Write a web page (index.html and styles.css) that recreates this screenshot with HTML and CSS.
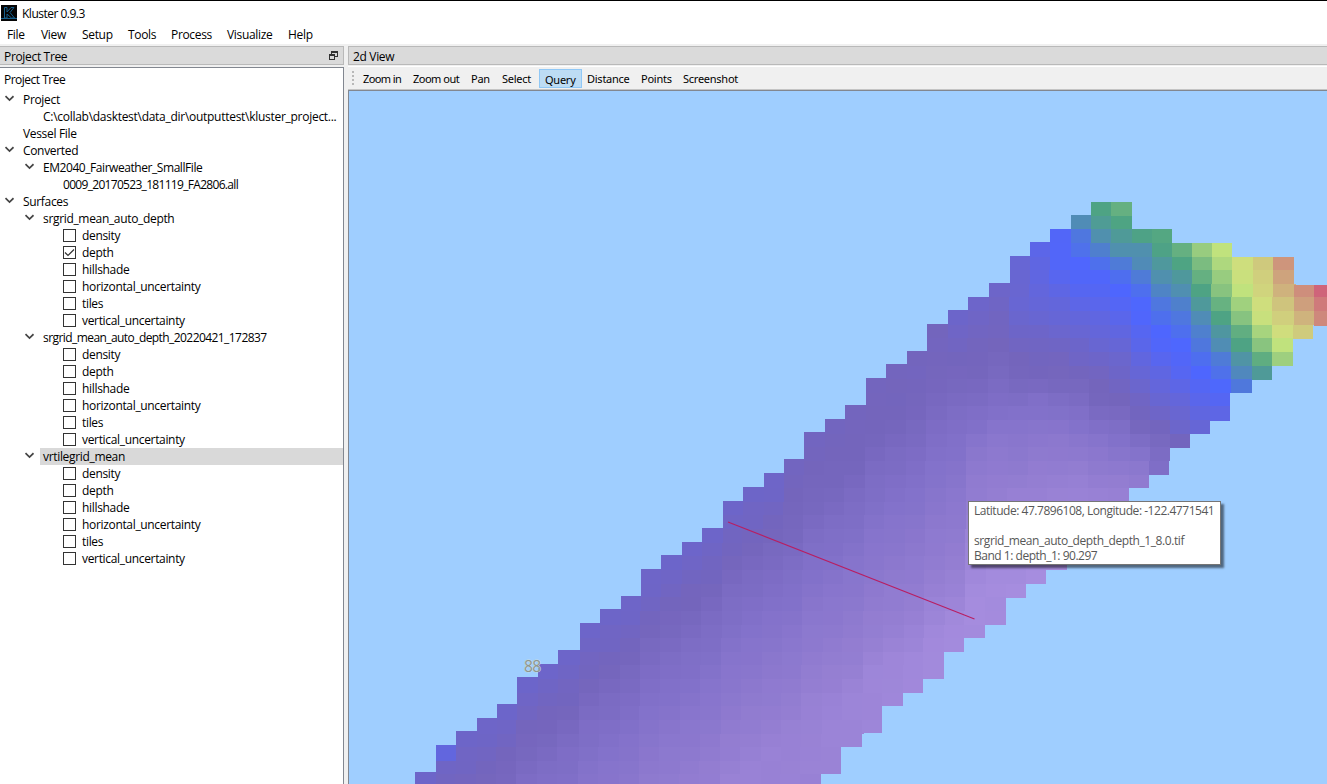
FILE: index.html
```html
<!DOCTYPE html>
<html lang="en">
<head>
<meta charset="utf-8">
<title>Kluster 0.9.3</title>
<link rel="stylesheet" href="styles.css">
</head>
<body>
<header class="titlebar">
  <svg class="logo" width="16" height="16" viewBox="0 0 16 16"><rect width="16" height="16" fill="#050505"/><path d="M3.500 2.500h2.500v4.500l4-4.500h3L9 7.500l4.500 5.500h-3L6 9v4H3.500zM0 13.500h16" fill="none" stroke="#165f8c" stroke-width="1"/></svg>
  <span class="app-name">Kluster 0.9.3</span>
</header>
<nav class="menubar">
  <span class="m-file">File</span><span class="m-view">View</span><span class="m-setup">Setup</span><span class="m-tools">Tools</span><span class="m-process">Process</span><span class="m-visualize">Visualize</span><span class="m-help">Help</span>
</nav>
<main class="workspace">
  <section class="dock">
    <div class="dock-title"><span>Project Tree</span>
      <svg width="9" height="9" viewBox="0 0 9 9" fill="none" stroke="#333" shape-rendering="crispEdges"><path d="M2.500 3V.5h6v5H6M2 1.500h6M.5 3.500h5v5h-5zM1 4.500h4"/></svg>
    </div>
    <div class="tree" id="tree"><div class="tree-head">Project Tree</div></div>
  </section>
  <section class="view">
    <div class="view-title">2d View</div>
    <div class="toolbar"><i class="grip"></i><span class="t-in">Zoom in</span><span class="t-out">Zoom out</span><span class="t-pan">Pan</span><span class="t-select">Select</span><span class="t-query">Query</span><span class="t-distance">Distance</span><span class="t-points">Points</span><span class="t-shot">Screenshot</span></div>
    <div class="map">
      <svg id="chart" width="978" height="693" viewBox="349 91 978 693">
        <g id="cells" shape-rendering="crispEdges"></g>
        <text class="sounding" x="524" y="672">88</text>
        <path d="M728 522L974.500 619" stroke="#b81e62" stroke-width="1.1" fill="none"/>
      </svg>
      <div class="tooltip"><p class="l1">Latitude: 47.7896108, Longitude: -122.4771541</p><p>&nbsp;</p><p class="l3">srgrid_mean_auto_depth_depth_1_8.0.tif</p><p class="l4">Band 1: depth_1: 90.297</p></div>
    </div>
  </section>
</main>
<script src="app.js"></script>
</body>
</html>
```

FILE: styles.css
```css
* { box-sizing: border-box; }
body { margin: 0; width: 1327px; height: 784px; overflow: hidden; background: #f0f0f0; color: #000; font: 12px/17px "Open Sans", "Noto Sans", sans-serif; letter-spacing: -0.33px; display: flex; flex-direction: column; white-space: nowrap; }
.titlebar { height: 25px; flex: none; background: #fff; border-top: 1px solid #000; display: flex; align-items: center; padding-left: 1px; gap: 5px; }
.logo { display: block; margin-top: -1px; }
.app-name { letter-spacing: -0.5px; }
.menubar { height: 19px; flex: none; background: #fff; display: flex; padding-left: 7px; line-height: 20px; }
.m-file { width: 34px; }
.m-view { width: 41px; }
.m-setup { width: 46px; }
.m-tools { width: 43px; }
.m-process { width: 56px; }
.m-visualize { width: 61px; }
.workspace { flex: 1; min-height: 0; display: flex; gap: 4px; padding-top: 2px; }
.dock { width: 344px; display: flex; flex-direction: column; }
.dock-title, .view-title { height: 19px; flex: none; background: #dadada; border: 1px solid #b9b9b9; line-height: 20px; padding-left: 4px; }
.dock-title { border-left: 0; display: flex; justify-content: space-between; padding-right: 5px; }
.dock-title svg { display: block; margin-top: 4px; }
.tree { margin-top: 2px; flex: 1; background: #fff; border-top: 1px solid #828790; border-right: 1px solid #828790; }
.tree-head { height: 23px; padding-left: 4px; line-height: 24px; letter-spacing: -0.5px; }
.row { height: 17px; display: flex; align-items: center; }
.row .arrow { width: 20px; flex: none; display: flex; padding-left: 4px; margin-top: -2px; }
.row .label { flex: 1; padding-left: 3px; }
.row.selected .label { background: #d9d9d9; }
.indent1 { padding-left: 20px; }
.indent2 { padding-left: 40px; }
.indent3 { padding-left: 63px; }
.indent3 .label { padding-left: 6px; }
.indent3 .file { padding-left: 0; }
.row .tight-file { letter-spacing: -0.69px; }
.row .tight-dated { letter-spacing: -0.57px; }
.row .tight-name { letter-spacing: -0.44px; }
.row .path { letter-spacing: -0.28px; }
.box { width: 13px; height: 13px; border: 1px solid #333; background: #fff; flex: none; }
.box svg { display: block; }
.view { flex: 1; min-width: 0; display: flex; flex-direction: column; }
.view-title { border-right: 0; }
.toolbar { height: 24px; flex: none; display: flex; margin-top: 1px; padding: 2px 0 0 4px; border-top: 1px solid #fff; font: 11px/20px "Noto Sans", sans-serif; letter-spacing: -0.25px; border-bottom: 1px solid #c4c4c4; }
.grip { width: 2px; height: 15px; margin: 2px 9px 0 0; background: repeating-linear-gradient(#b8b8b8 0 2px, transparent 2px 4px); }
.toolbar span { height: 19px; }
.toolbar .t-in { width: 50px; letter-spacing: -0.6px; }
.toolbar .t-out { width: 58px; letter-spacing: -0.5px; }
.t-pan { width: 31px; }
.t-select { width: 37px; }
.toolbar .t-query { width: 43px; background: #bddcf4; border: 1px solid #90c8f6; padding-left: 5px; line-height: 20px; margin-right: 5px; }
.t-distance { width: 54px; }
.t-points { width: 42px; }
.map { flex: 1; position: relative; background: #9fceff; border-left: 1px solid #828790; border-top: 1px solid #828790; overflow: hidden; }
#chart { display: block; }
.sounding { font: 15.5px "Open Sans", sans-serif; fill: #8e9590; stroke: #c9dddf; stroke-width: 1px; paint-order: stroke; letter-spacing: -0.5px; }
.tooltip { position: absolute; left: 619px; top: 410px; width: 253px; height: 64px; background: #fff; border: 1px solid #767676; padding: 1px 5px; color: #575757; line-height: 15px; box-shadow: 3px 3px 2px rgba(0,0,0,.5); }
.tooltip p { margin: 0; }
.tooltip .l1 { letter-spacing: -0.47px; }
.tooltip .l3 { letter-spacing: -0.41px; }
.tooltip .l4 { letter-spacing: -0.48px; }
```

FILE: app.js
```js
const rows = [
  [0, "Project", 1], [2, "C:\\collab\\dasktest\\data_dir\\outputtest\\kluster_project...", 0, 0, 0, "path"],
  [1, "Vessel File"], [0, "Converted", 1], [1, "EM2040_Fairweather_SmallFile", 1, 0, 0, "tight-name"],
  [3, "0009_20170523_181119_FA2806.all", 0, 0, 0, "file tight-file"], [0, "Surfaces", 1]
];
const layers = ["density", "depth", "hillshade", "horizontal_uncertainty", "tiles", "vertical_uncertainty"];
["srgrid_mean_auto_depth", "srgrid_mean_auto_depth_20220421_172837", "vrtilegrid_mean"].forEach((name, i) => {
  rows.push([1, name, 1, i === 2, 0, i === 1 ? "tight-dated" : ""]);
  layers.forEach((l, k) => rows.push([3, l, 0, 0, i === 0 && k === 1 ? 2 : 1]));
});
const arrow = '<span class="arrow"><svg width="10" height="7" viewBox="0 0 10 7"><path d="M1.500 1.200l4 3.800 4-3.800" fill="none" stroke="#444" stroke-width="1.700"/></svg></span>';
const tick = '<svg width="11" height="11" viewBox="0 0 11 11"><path d="M1 5.500l3 3L10 2.500" fill="none" stroke="#333" stroke-width="1.200"/></svg>';
document.getElementById("tree").innerHTML += rows.map(([level, text, open, selected, box, fit = ""]) =>
  `<div class="row indent${level}${selected ? " selected" : ""}">${open ? arrow : ""}${box ? `<span class="box">${box === 2 ? tick : ""}</span>` : ""}<span class="label ${fit}">${text}</span></div>`).join("");

/* Depth ramp, shallow to deep */
const ramp = [[207,100,122],[206,160,125],[208,222,125],[192,226,125],[78,164,130],[80,144,174],[78,102,255],[100,102,218],[116,101,188],[130,113,202],[148,126,210],[166,141,223]];
function colour(v) {
  v = Math.max(0, Math.min(10.999, v));
  const i = Math.floor(v), f = v - i;
  return "rgb(" + ramp[i].map((c, k) => Math.round(c + (ramp[i + 1][k] - c) * f)) + ")";
}
function lerp(stops, p) {
  if (p <= stops[0][0]) return stops[0][1];
  for (let i = 1; i < stops.length; i++) if (p <= stops[i][0]) {
    const [a, u] = stops[i - 1], [b, w] = stops[i];
    return u + (w - u) * (p - a) / (b - a);
  }
  return stops[stops.length - 1][1];
}
/* [left, top, bottom] of every grid column */
const columns = [
[415,772,784],[436,745,784],[456,731,784],[477,718,784],[497,704,784],[517,677,784],[538,664,784],[558,650,784],[580,623,784],[600,609,784],[621,596,784],[641,569,784],[661,555,784],[682,542,784],[702,528,784],[723,501,784],[743,487,784],[764,473,784],[784,459,784],[804,432,784],[825,419,774],[845,405,747],[866,378,733],[886,364,706],[907,351,693],[927,324,679],[948,310,652],[968,297,638],[989,283,625],
[1010,256,598],[1030,242,584],[1050,229,570],[1071,215,557],[1091,202,543],[1111,202,515],[1132,229,488],[1152,229,475],[1172,243,448],[1192,243,434],[1212,243,421],[1232,257,393],[1253,257,380],[1273,257,366],[1294,285,339],[1314,285,326],[1334,0,0]];
const slope = {
1010:[[256,7.2],[310,7.3],[340,7.7],[370,8.1],[390,8.4],[410,8.9],[440,9.4],[470,9.7],[500,10.2],[590,11]],
1030:[[249,6.6],[270,6.8],[310,7.1],[345,7.8],[380,8.1],[395,8.7],[420,9.2],[480,10],[570,11]],
1050:[[236,6.2],[263,6.15],[290,6.7],[320,7.2],[350,7.8],[380,8.1],[400,8.7],[440,9.5],[500,10.3],[560,11]],
1071:[[222,5.1],[236,5.6],[250,5.75],[263,6.02],[277,6.15],[310,6.8],[340,7.4],[370,7.9],[400,8.5],[440,9.4],[500,10.4]],
1091:[[209,4.05],[222,4.4],[236,5],[250,5.4],[263,5.75],[277,6.1],[291,6.3],[310,6.6],[330,7],[370,7.8],[400,8.1],[440,9.2],[500,10.3]],
1111:[[209,3.8],[222,4],[236,4.5],[250,5],[263,5.5],[277,5.8],[291,6],[310,6.4],[340,7],[370,7.6],[400,8],[440,9],[490,10.1]],
1132:[[236,4.1],[250,5],[263,5.1],[277,5.5],[291,5.8],[306,6],[320,6.1],[350,6.7],[380,7.3],[410,7.9],[425,8.1],[450,9],[488,10]],
1152:[[236,3.95],[250,4.1],[263,4.6],[277,5],[291,5.3],[306,5.65],[320,5.8],[332,6],[350,6.2],[370,6.7],[400,7.3],[430,8],[460,8.8]],
1172:[[250,3.8],[263,4],[277,4.6],[291,5.05],[305,5.4],[318,5.6],[332,5.8],[346,6],[375,6.4],[400,7],[430,7.6],[448,8.2]],
1192:[[250,3.35],[263,3.6],[277,3.8],[291,4.05],[305,4.6],[318,5.1],[332,5.4],[346,5.6],[359,5.8],[373,6],[400,6.6],[430,7.2]],
1212:[[250,3],[263,3.15],[277,3.35],[291,3.5],[305,3.8],[318,4.05],[332,4.7],[346,5.1],[359,5.5],[373,5.75],[387,5.98],[414,6.7]],
1232:[[263,2.1],[277,2.4],[291,3],[305,3.3],[318,3.5],[332,3.85],[346,4.05],[359,4.8],[373,5.2],[387,5.6]],
1253:[[263,1.65],[277,1.75],[291,1.85],[305,2.1],[318,2.5],[332,3.25],[346,3.5],[359,3.85],[373,4.5]],
1273:[[263,.8],[277,1.05],[291,1.3],[305,1.6],[318,1.75],[332,2],[346,3.05],[359,3.3]],
1294:[[291,.7],[305,1],[318,1.3],[332,1.7]],
1314:[[291,0],[305,.4],[318,.6]]};
const swath = [[0,7.5],[35,7.8],[65,8.1],[100,8.6],[165,9.25],[265,10.1],[315,10.8]];
const crest = [[0,7.5],[60,8],[85,8.2],[110,8.6],[150,9.35],[200,9.9],[300,10.9]];
let out = "";
for (let i = 0; i < columns.length - 1; i++) {
  const [x, top, bottom] = columns[i];
  const [next, nextTop, nextBottom] = columns[i + 1];
  for (let y = top, n = 0; y < bottom - 2; n++) {
    const row = Math.round((y - 202) / 13.63);
    let end = Math.round(202 + (row + 1) * 13.63);
    if (end > bottom - 3) end = bottom;
    const mid = (y + end) / 2;
    const edge = x > 775 && x < 940 ? Math.max(0, .4 - (mid - top) * .006) : 0;
    let v = slope[x] ? lerp(slope[x], mid) : lerp(x > 960 ? crest : swath, mid - top) + edge;
    if (x < 960) v = Math.min(v, 10.25 + Math.max(0, x - 800) / 250);
    if (x === 436 && n === 0) v = 6.9;
    if (v > 6.3) v += (((i * 7 + row * 11) % 5) - 2) * .02;
    const drift = Math.round((mid - top) * .011);
    /* inner cells reach under their right-hand neighbour so no seam shows */
    const overlap = mid > nextTop && mid < nextBottom ? 2 : 0;
    out += `<rect x="${x - drift}" y="${y}" width="${next - x + overlap}" height="${end - y}" fill="${colour(v)}"/>`;
    y = end;
  }
}
document.getElementById("cells").innerHTML = out;
```
